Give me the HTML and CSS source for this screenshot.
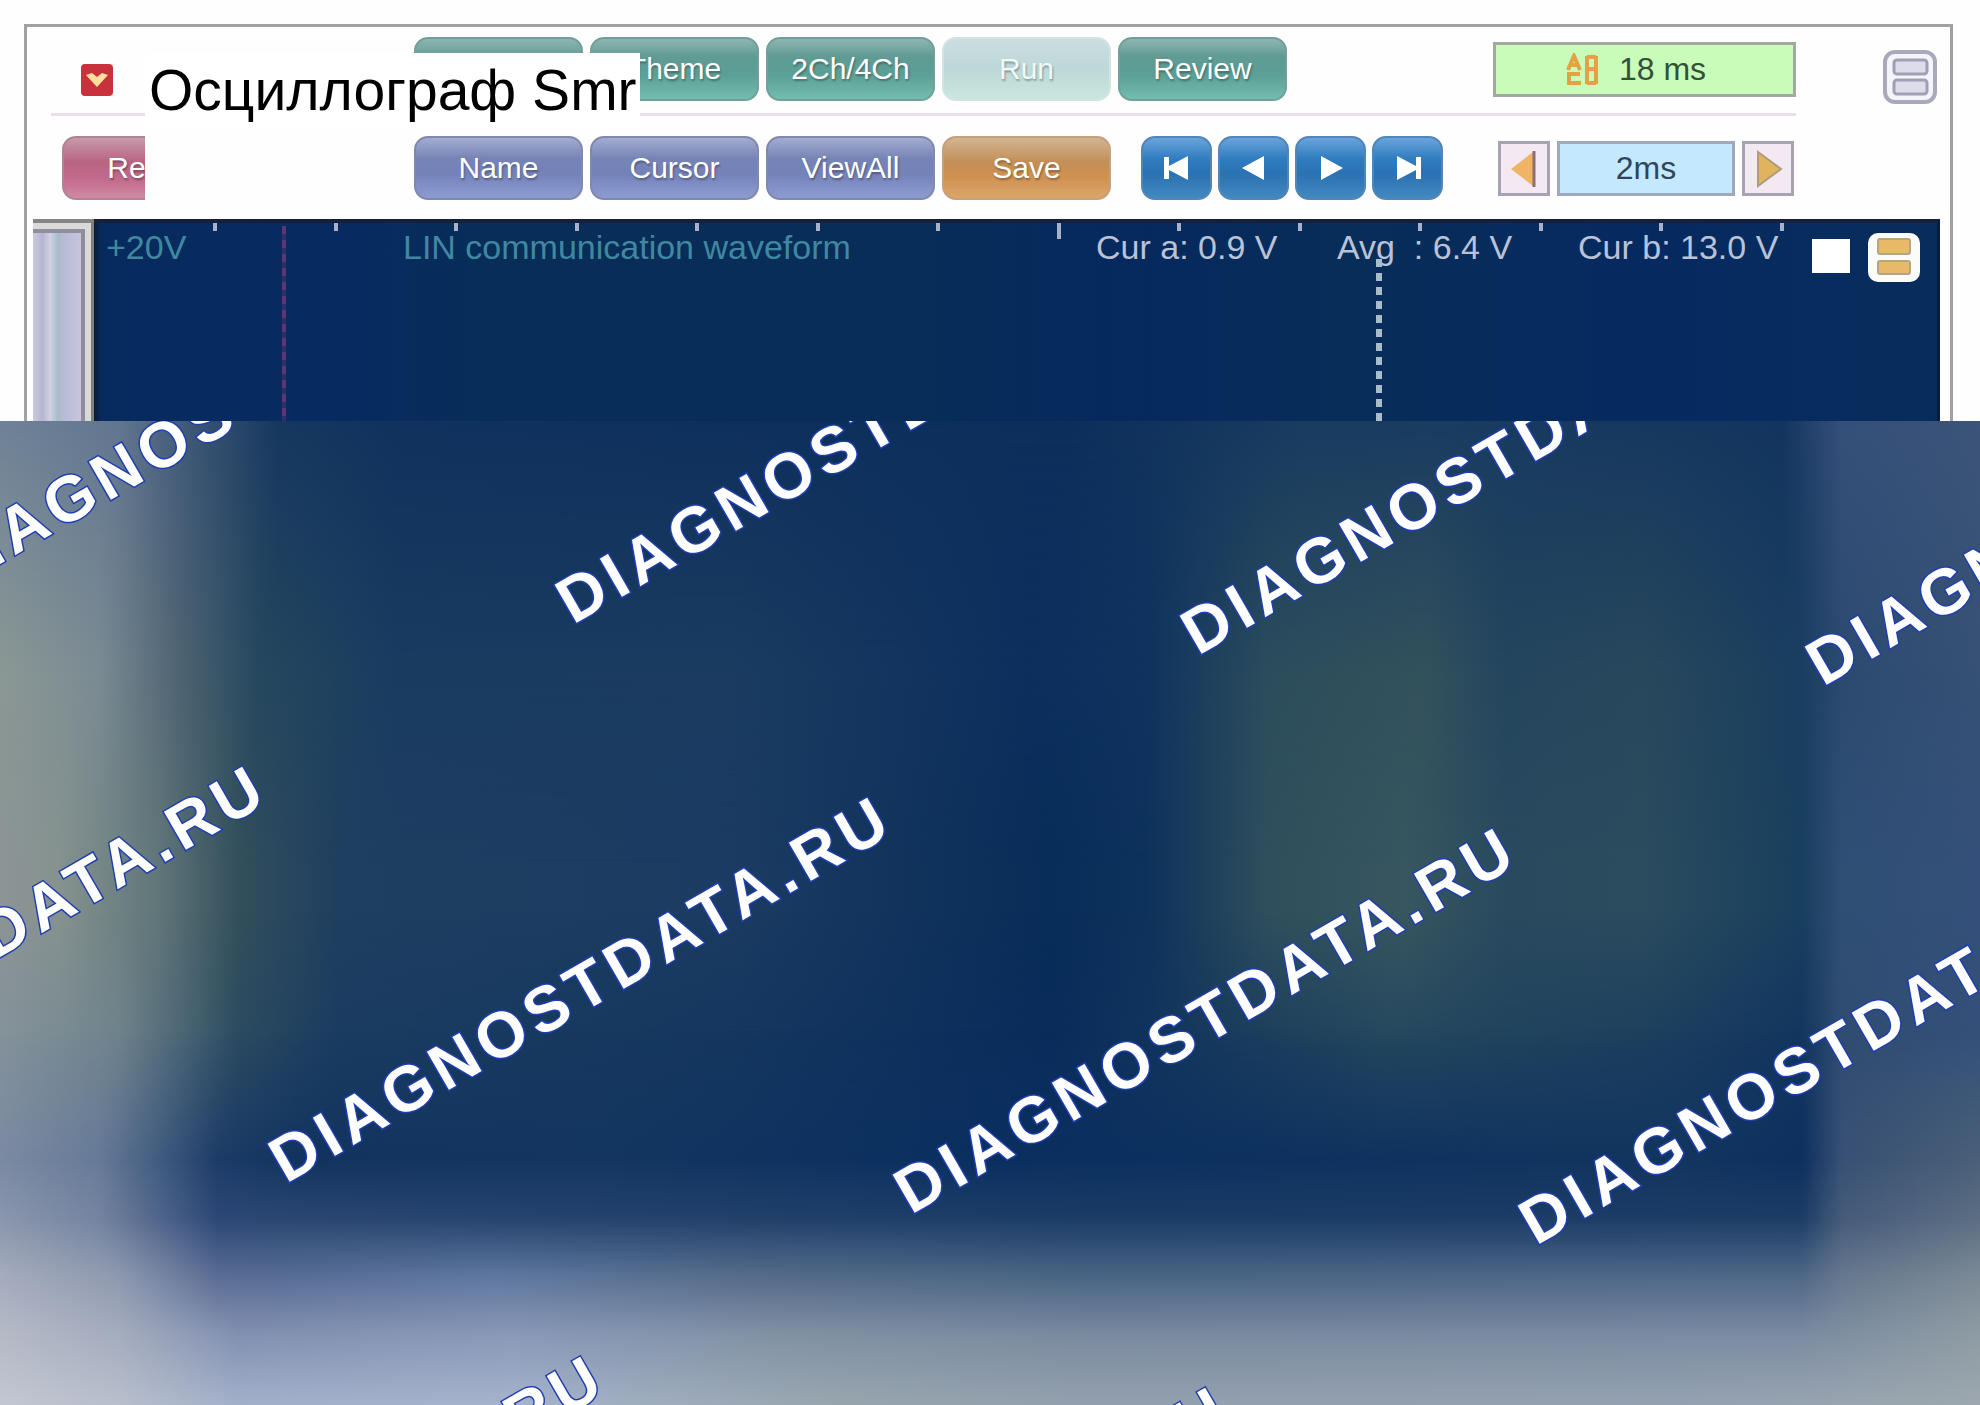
FILE: index.html
```html
<!DOCTYPE html>
<html lang="ru">
<head>
  <meta charset="UTF-8" />
  <title>Осциллограф Smr</title>
  <meta name="viewport" content="width=device-width, initial-scale=1.0" />
  <link rel="stylesheet" href="styles.css">
</head>
<body>
  <div class="window">
    <h1 class="title">Осциллограф Smr</h1>
    <div class="toolbar">
      <div class="rows">
        <div class="row">
          <div class="side">
            <button class="drop" aria-label="Open list">
              <svg width="34" height="34" viewBox="0 0 34 34"><rect x="1" y="1" width="32" height="32" rx="4" fill="#c8323c"/><path d="M6 12l6-2 5 4 5-4 6 2-11 12z" fill="#ffdf9e"/></svg>
            </button>
          </div>
          <button class="btn green" aria-label="Setup"></button>
          <button class="btn green">Theme</button>
          <button class="btn green">2Ch/4Ch</button>
          <button class="btn green" disabled>Run</button>
          <button class="btn green">Review</button>
          <output class="field time">
            <svg width="36" height="34" viewBox="0 0 36 34" fill="none" stroke="#e3a343" stroke-width="4"><path d="M3 17L9 3l6 14M6 12h7M15 21H4v9h12M22 3v28M31 3v28"/><path d="M22 4h9M22 16h9M22 30h9" stroke="#ee9a50"/></svg>
            18 ms
          </output>
        </div>
        <div class="line"></div>
        <div class="row">
          <div class="side">
            <div class="cut"><button class="btn pink">Reset</button></div>
          </div>
          <button class="btn blue">Name</button>
          <button class="btn blue">Cursor</button>
          <button class="btn blue">ViewAll</button>
          <button class="btn orange">Save</button>
          <div class="nav">
            <button class="step" aria-label="First"><svg width="36" height="30" viewBox="0 0 36 30"><path d="M5 4h5v9L29 3v24L10 17v9H5z"/></svg></button>
            <button class="step" aria-label="Back"><svg width="36" height="30" viewBox="0 0 36 30"><path d="M6 15L28 3v24z"/></svg></button>
            <button class="step" aria-label="Forward"><svg width="36" height="30" viewBox="0 0 36 30"><path d="M30 15L8 3v24z"/></svg></button>
            <button class="step" aria-label="Last"><svg width="36" height="30" viewBox="0 0 36 30"><path d="M31 4h-5v9L7 3v24l19-10v9h5z"/></svg></button>
          </div>
          <div class="scale">
            <button class="arrow" aria-label="Less"><svg width="30" height="40" viewBox="0 0 30 40"><path d="M2 20L24 3v34z" fill="#f0b465"/><path d="M25 2v36" stroke="#8a7070" stroke-width="3"/></svg></button>
            <output class="field step-time">2ms</output>
            <button class="arrow" aria-label="More"><svg width="30" height="40" viewBox="0 0 30 40"><path d="M5 3l23 17L5 37z" fill="#e0b45c" stroke="#b09a80" stroke-width="2"/></svg></button>
          </div>
        </div>
      </div>
      <button class="menu" aria-label="Menu">
        <svg width="56" height="56" viewBox="0 0 56 56"><rect x="3" y="3" width="50" height="50" rx="10" fill="#f4f4fb" stroke="#a9a9bb" stroke-width="4"/><g fill="#dcdcea" stroke="#a0a0b4" stroke-width="3"><rect x="12" y="11" width="33" height="14" rx="3"/><rect x="12" y="31" width="33" height="14" rx="3"/></g></svg>
      </button>
    </div>
    <div class="scope">
      <div class="scroll"><div class="thumb"></div></div>
      <div class="screen">
        <div class="ticks"><i></i><i></i><i></i><i></i><i></i><i></i><i></i><i class="long"></i><i></i><i></i><i></i><i></i><i></i><i></i></div>
        <div class="cursor-a"></div>
        <div class="cursor-b"></div>
        <div class="info">
          <span class="range">+20V</span>
          <span class="name">LIN communication waveform</span>
          <div class="values">
            <span>Cur a: 0.9 V</span>
            <span>Avg &nbsp;: 6.4 V</span>
            <span>Cur b: 13.0 V</span>
          </div>
          <input class="check" type="checkbox" aria-label="Show channel">
          <button class="chan" aria-label="Channel menu">
            <svg width="54" height="51" viewBox="0 0 54 51"><rect x="1" y="1" width="52" height="49" rx="10" fill="#fbfbf8"/><g fill="#e8b968" stroke="#b3a58c" stroke-width="2"><rect x="11" y="7" width="32" height="15" rx="2"/><rect x="11" y="29" width="32" height="13" rx="2"/></g></svg>
          </button>
        </div>
      </div>
    </div>
  </div>
  <div class="cover">
    <div class="shade s1"></div>
    <div class="shade s2"></div>
    <div class="shade s3"></div>
    <div class="shade s4"></div>
    <div class="shade s5"></div>
    <div class="shade s6"></div>
    <div class="shade s7"></div>
    <div class="shade s8"></div>
    <div class="shade s9"></div>
    <svg class="marks">
      <text transform="translate(-52 173) rotate(-30)">DIAGNOSTDATA.RU</text>
      <text transform="translate(573 204) rotate(-30)">DIAGNOSTDATA.RU</text>
      <text transform="translate(1198 235) rotate(-30)">DIAGNOSTDATA.RU</text>
      <text transform="translate(1823 266) rotate(-30)">DIAGNOSTDATA.RU</text>
      <text transform="translate(-339 732) rotate(-30)">DIAGNOSTDATA.RU</text>
      <text transform="translate(286 763) rotate(-30)">DIAGNOSTDATA.RU</text>
      <text transform="translate(911 794) rotate(-30)">DIAGNOSTDATA.RU</text>
      <text transform="translate(1536 825) rotate(-30)">DIAGNOSTDATA.RU</text>
      <text transform="translate(-1 1322) rotate(-30)">DIAGNOSTDATA.RU</text>
      <text transform="translate(624 1353) rotate(-30)">DIAGNOSTDATA.RU</text>
    </svg>
  </div>
</body>
</html>
```
FILE: styles.css
```css
* {
  box-sizing: border-box;
}
body {
  margin: 0;
  min-height: 100vh;
  display: flex;
  flex-direction: column;
  background: #fefefe;
  font-family: "Liberation Sans", Arial, sans-serif;
  overflow-x: hidden;
}
button {
  padding: 0;
  border: none;
  background: none;
  font-family: inherit;
  cursor: pointer;
}
svg {
  display: block;
}
.window {
  position: relative;
  margin: 24px 27px 0 24px;
  border: 3px solid #a3a0a3;
  border-bottom: none;
}
.title {
  position: absolute;
  left: 118px;
  top: 26px;
  width: 495px;
  height: 74px;
  margin: 0;
  padding-left: 4px;
  background: #fff;
  color: #000;
  font-size: 57px;
  line-height: 74px;
  font-weight: normal;
  white-space: nowrap;
}

/* toolbar */
.toolbar {
  display: flex;
  padding: 10px 12px 19px 24px;
}
.rows {
  flex: 1;
}
.row {
  display: flex;
  gap: 7px;
}
.side {
  width: 356px;
  flex: none;
  padding-left: 11px;
}
.drop {
  display: block;
  margin: 26px 0 0 18px;
}
.line {
  height: 3px;
  margin: 12px 0 20px;
  background: #eadfe8;
}
.cut {
  width: 83px;
  overflow: hidden;
}
.btn {
  width: 169px;
  height: 64px;
  flex: none;
  border: 2px solid;
  border-radius: 14px;
  color: #fff;
  font-size: 30px;
  text-shadow: 1px 2px 2px rgba(0,0,0,0.3);
}
.green {
  background: linear-gradient(#8fb5b0, #5f9b94 30%, #5b9f96 60%, #74bdae);
  border-color: #70a09b;
}
.green:disabled {
  background: linear-gradient(#cbdedf, #bcd8d8 50%, #cbe6dd);
  border-color: #d3e2e2;
  color: #eefaf6;
}
.blue {
  background: linear-gradient(#a3add0, #7583b5 35%, #7482ba 60%, #8c9cd2);
  border-color: #8088ac;
}
.pink {
  background: linear-gradient(#c79aaa, #b86482 40%, #c36c8e 70%, #cf8aa2);
  border-color: #ae8494;
}
.orange {
  background: linear-gradient(#d2b594, #c38e56 40%, #cf9150 65%, #dba66a);
  border-color: #c4a07c;
}
.nav {
  display: flex;
  gap: 6px;
  margin-left: 23px;
}
.step {
  display: flex;
  align-items: center;
  justify-content: center;
  width: 71px;
  height: 64px;
  border: 2px solid #5285b8;
  border-radius: 14px;
  background: linear-gradient(#6aa4dc, #2f7cc0 35%, #2a72b2 60%, #4289c0);
}
.step path {
  fill: #fff;
}
.field {
  display: flex;
  align-items: center;
  justify-content: center;
  height: 55px;
  border: 3px solid #a3a8a3;
  color: #34503c;
  font-size: 32px;
}
.time {
  gap: 18px;
  width: 303px;
  margin: 5px 0 0 auto;
  padding-right: 18px;
  background: #c8fcb8;
}
.scale {
  display: flex;
  gap: 7px;
  margin: 5px 2px 0 auto;
}
.step-time {
  width: 178px;
  border-color: #9fa9bc;
  background: #c4e8fe;
  color: #2f4658;
}
.arrow {
  display: flex;
  align-items: center;
  justify-content: center;
  width: 52px;
  height: 55px;
  border: 3px solid #aaa2b2;
  background: #f3e9f2;
}
.menu {
  flex: none;
  align-self: flex-start;
  margin: 12px 0 0 86px;
}

/* oscilloscope screen */
.scope {
  display: flex;
  height: 202px;
  margin: 0 10px 0 6px;
}
.scroll {
  width: 61px;
  padding-top: 6px;
  border-top: 4px solid #858585;
  border-right: 3px solid #807f78;
  background: #d9d9d9;
}
.thumb {
  height: 100%;
  margin-right: 6px;
  border-top: 4px solid #8e8e9c;
  border-right: 4px solid #8e8e9c;
  background: linear-gradient(90deg, #c9c8dc, #b7b6d2 20%, #cfd0e4 36%, #a8bcc8 52%, #b9bcd8 66%, #c8c4dc);
}
.screen {
  position: relative;
  flex: 1;
  border-top: 4px solid #15203c;
  border-right: 3px solid #0a1c3c;
  background: linear-gradient(90deg, #061c3c, #072b5f 8px, #072b60 14%, #072d58 22%, #072d58 44%, #06295e 56%, #072d59 68%, #062a60 84%, #072d5c);
}
.ticks {
  display: flex;
  justify-content: space-between;
  height: 16px;
  margin: 0 153px 0 119px;
}
.ticks i {
  width: 4px;
  height: 8px;
  background: #a9b0c8;
}
.ticks .long {
  height: 16px;
}
.info {
  display: flex;
  align-items: flex-start;
  margin: -11px 16px 0 12px;
  font-size: 34px;
  line-height: 38px;
  white-space: nowrap;
}
.range,
.name {
  color: #4088a0;
}
.range {
  width: 297px;
}
.values {
  display: flex;
  margin-left: auto;
  color: #b9c2d6;
}
.values span {
  width: 241px;
}
.values span:last-child {
  width: 234px;
}
.check {
  appearance: none;
  width: 38px;
  height: 34px;
  margin: 11px 17px 0 0;
  background: #fff;
}
.chan {
  margin-top: 4px;
}
.cursor-a,
.cursor-b {
  position: absolute;
  bottom: 0;
}
.cursor-a {
  left: 10%;
  top: 3px;
  width: 4px;
  margin-left: 4px;
  background: repeating-linear-gradient(#5f3470 0 8px, #2c2f68 8px 14px);
}
.cursor-b {
  left: 69%;
  top: 36px;
  width: 6px;
  margin-left: 10px;
  background: repeating-linear-gradient(#a9bccb 0 8px, transparent 8px 14px);
}

/* lower part: colour bands, each one fading in over the band above */
.cover {
  position: relative;
  flex: 1;
  min-height: 640px;
  overflow: hidden;
}
.shade {
  position: absolute;
  inset: 0;
}
.s1 {
  background: linear-gradient(90deg, #6f8298, #627690 6%, #3a5474 10%, #17385f 14%, #10325e 20%, #0c2f5c 54%, #193c60 66%, #1a3c60 72%, #16385f 84%, #12355f 90%, #35507a 93%, #3c5478);
}
.s2 {
  background: linear-gradient(90deg, #8b9894, #7b8b93 5%, #4f6472 9%, #26485e 13%, #193c60 20%, #1b3c60 37%, #0c2f5e 52%, #0f335f 58%, #2c4d5c 64%, #33525c 72%, #24465e 76%, #28485c 83%, #193e60 91%, #2c4a70 93%, #365174);
  mask-image: linear-gradient(transparent, #000 26%);
}
.s3 {
  background: linear-gradient(90deg, #8c9496, #85928f 3%, #607679 8%, #334f5b 12%, #1f3f60 17%, #1b3b62 37%, #082d58 53%, #0d325c 58%, #2f4f5c 64%, #375660 71%, #294a5e 76%, #2b4c5e 83%, #183f5e 91%, #2f4f74 93%, #34507a);
  mask-image: linear-gradient(transparent 26%, #000 45%);
}
.s4 {
  background: linear-gradient(90deg, #84929a, #6f838c 6%, #2b4b60 12%, #1a3c60 17%, #14375f 37%, #092c5c 53%, #24475e 70%, #1c3f5e 83%, #123560 91%, #304c70 93%, #34507a);
  mask-image: linear-gradient(transparent 50%, #000 64%);
}
.s5 {
  background: linear-gradient(90deg, #7b8aa2, #667a98 5%, #1c3c68 11%, #12335f 15%, #133660 30%, #0a2f60 50%, #12355f 85%, #0d3060 91%, #385074 93%, #4a6078);
  mask-image: linear-gradient(transparent 62%, #000 75%);
}
.s6 {
  background: linear-gradient(90deg, #8a96ad, #7484a0 5%, #2c4776 11%, #2a4772 14%, #1a3c66 55%, #1b3d66 91%, #455b7a 93%, #5c6e84);
  mask-image: linear-gradient(transparent 75%, #000 81%);
}
.s7 {
  background: linear-gradient(90deg, #a5acbd, #8f99b0 6%, #5a6d94 11%, #586d95 14%, #6078a0 25%, #566c8a 38%, #4a6585 55%, #50688a 85%, #506888 91%, #66788e 93%, #7c8a96);
  mask-image: linear-gradient(transparent 81%, #000 87%);
}
.s8 {
  background: linear-gradient(90deg, #b5bac6, #a5adbe 6%, #8391b2 12%, #8a9ab8 26%, #8292a4 40%, #7b8ba0 55%, #7c8ca2 91%, #8f9ca4);
  mask-image: linear-gradient(transparent 87%, #000 93%);
}
.s9 {
  background: linear-gradient(90deg, #c2c7d2, #b8bfcc 6%, #a3b0ca 12%, #a6b3cc 26%, #98a6ae 42%, #93a0ae 55%, #95a2b2 85%, #9da8ae);
  mask-image: linear-gradient(transparent 93%, #000);
}
.marks {
  position: absolute;
  inset: 0;
  width: 100%;
  height: 100%;
}
.marks text {
  fill: #fff;
  stroke: #1f3fae;
  stroke-width: 3px;
  paint-order: stroke;
  font-size: 64px;
  font-weight: bold;
  letter-spacing: 6px;
}
```
